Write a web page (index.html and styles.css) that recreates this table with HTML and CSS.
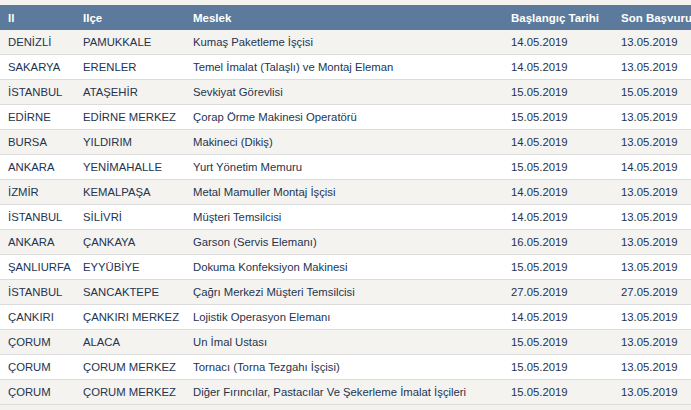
FILE: index.html
```html
<!DOCTYPE html>
<html lang="tr">
<head>
<meta charset="utf-8">
<link rel="stylesheet" href="styles.css">
</head>
<body>
<table class="jobs">
<colgroup><col class="c1"><col class="c2"><col class="c3"><col class="c4"><col class="c5"></colgroup>
<thead>
<tr><th>Il</th><th>Ilçe</th><th>Meslek</th><th>Başlangıç Tarihi</th><th>Son Başvuru Tarihi</th></tr>
</thead>
<tbody>
<tr><td>DENİZLİ</td><td>PAMUKKALE</td><td>Kumaş Paketleme İşçisi</td><td>14.05.2019</td><td>13.05.2019</td></tr>
<tr><td>SAKARYA</td><td>ERENLER</td><td>Temel İmalat (Talaşlı) ve Montaj Eleman</td><td>14.05.2019</td><td>13.05.2019</td></tr>
<tr><td>İSTANBUL</td><td>ATAŞEHİR</td><td>Sevkiyat Görevlisi</td><td>15.05.2019</td><td>15.05.2019</td></tr>
<tr><td>EDİRNE</td><td>EDİRNE MERKEZ</td><td>Çorap Örme Makinesi Operatörü</td><td>15.05.2019</td><td>13.05.2019</td></tr>
<tr><td>BURSA</td><td>YILDIRIM</td><td>Makineci (Dikiş)</td><td>14.05.2019</td><td>13.05.2019</td></tr>
<tr><td>ANKARA</td><td>YENİMAHALLE</td><td>Yurt Yönetim Memuru</td><td>15.05.2019</td><td>14.05.2019</td></tr>
<tr><td>İZMİR</td><td>KEMALPAŞA</td><td>Metal Mamuller Montaj İşçisi</td><td>14.05.2019</td><td>13.05.2019</td></tr>
<tr><td>İSTANBUL</td><td>SİLİVRİ</td><td>Müşteri Temsilcisi</td><td>14.05.2019</td><td>13.05.2019</td></tr>
<tr><td>ANKARA</td><td>ÇANKAYA</td><td>Garson (Servis Elemanı)</td><td>16.05.2019</td><td>13.05.2019</td></tr>
<tr><td>ŞANLIURFA</td><td>EYYÜBİYE</td><td>Dokuma Konfeksiyon Makinesi</td><td>15.05.2019</td><td>13.05.2019</td></tr>
<tr><td>İSTANBUL</td><td>SANCAKTEPE</td><td>Çağrı Merkezi Müşteri Temsilcisi</td><td>27.05.2019</td><td>27.05.2019</td></tr>
<tr><td>ÇANKIRI</td><td>ÇANKIRI MERKEZ</td><td>Lojistik Operasyon Elemanı</td><td>14.05.2019</td><td>13.05.2019</td></tr>
<tr><td>ÇORUM</td><td>ALACA</td><td>Un İmal Ustası</td><td>15.05.2019</td><td>13.05.2019</td></tr>
<tr><td>ÇORUM</td><td>ÇORUM MERKEZ</td><td>Tornacı (Torna Tezgahı İşçisi)</td><td>15.05.2019</td><td>13.05.2019</td></tr>
<tr><td>ÇORUM</td><td>ÇORUM MERKEZ</td><td>Diğer Fırıncılar, Pastacılar Ve Şekerleme İmalat İşçileri</td><td>15.05.2019</td><td>13.05.2019</td></tr>
</tbody>
</table>
</body>
</html>
```
FILE: styles.css
```css
html, body {
  margin: 0;
  padding: 0;
  background: #f4f2ee;
  overflow: hidden;
}
body {
  padding-top: 5px;
  font-family: "Liberation Sans", Arial, sans-serif;
  font-size: 11.3px;
  color: #24344f;
}
.jobs {
  border-collapse: collapse;
  table-layout: fixed;
  width: 740px;
}
.c1 { width: 75px; }
.c2 { width: 110px; }
.c3 { width: 318px; }
.c4 { width: 110px; }
.c5 { width: 127px; }
.jobs th {
  background: #5b7a9c;
  color: #fff;
  font-size: 11.5px;
  font-weight: bold;
  text-align: left;
  height: 25px;
  padding: 0 8px;
  white-space: nowrap;
  overflow: hidden;
}
.jobs td {
  height: 24px;
  padding: 0 8px;
  border-bottom: 1px solid #dcdcdc;
  white-space: nowrap;
  overflow: hidden;
}
.jobs tbody tr:nth-child(odd) td { background: #f5f3ef; }
.jobs tbody tr:nth-child(even) td { background: #ffffff; }
```
